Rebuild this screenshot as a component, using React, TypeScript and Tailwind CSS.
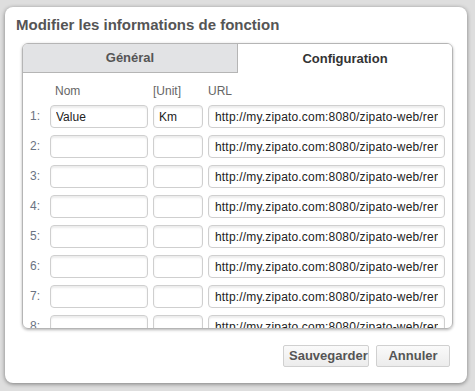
import React from "react";

const URL_VALUE = "http://my.zipato.com:8080/zipato-web/remoting/attribute/set?serial=";

const rows = [
  { nom: "Value", unit: "Km" },
  { nom: "", unit: "" },
  { nom: "", unit: "" },
  { nom: "", unit: "" },
  { nom: "", unit: "" },
  { nom: "", unit: "" },
  { nom: "", unit: "" },
  { nom: "", unit: "" },
];

const inputClass =
  "h-[23px] rounded-[4px] border border-[#cfcfcf] bg-white px-[5px] text-[12px] text-[#222] shadow-[inset_0_2px_2px_rgba(0,0,0,0.08)] outline-none";

const App = () => {
  return (
    <div
      className="w-[475px] h-[391px] overflow-hidden bg-[#dedede] pt-[7px] pl-[5px]"
      style={{ fontFamily: '"Liberation Sans", Arial, sans-serif' }}
    >
      <div className="w-[462px] h-[376px] rounded-[8px] bg-white shadow-[0_1px_4px_rgba(0,0,0,0.45)] flex flex-col">
        <h1 className="pl-[11px] pt-[9px] h-[27px] text-[15px] leading-[18px] font-bold text-[#555]">
          Modifier les informations de fonction
        </h1>

        <div className="ml-[17px] mt-[9px] w-[431px] h-[286px] rounded-[6px] border border-[#b5b5b5] shadow-[0_1px_3px_rgba(0,0,0,0.3)] overflow-hidden flex flex-col">
          <div className="flex h-[29px] shrink-0">
            <div className="w-[215px] flex items-center justify-center bg-[#e2e3e5] border-r border-b border-[#b5b5b5] text-[13px] font-bold text-[#555]">
              Général
            </div>
            <div className="flex-1 flex items-center justify-center bg-white text-[13px] font-bold text-[#333]">
              Configuration
            </div>
          </div>

          <div className="flex-1 overflow-hidden">
            <div className="flex h-[32px] items-center text-[12px] text-[#666] pt-[4px]">
              <span className="ml-[32px] w-[98px]">Nom</span>
              <span className="w-[55px]">[Unit]</span>
              <span>URL</span>
            </div>
            <div className="flex flex-col gap-[7px]">
              {rows.map((row, i) => (
                <div key={i} className="flex items-center h-[23px]">
                  <span className="w-[27px] pl-[7px] pb-[2px] text-[12px] text-[#6a7382]">{i + 1}:</span>
                  <input className={`${inputClass} w-[98px]`} defaultValue={row.nom} readOnly />
                  <input className={`${inputClass} ml-[5px] w-[50px]`} defaultValue={row.unit} readOnly />
                  <input
                    className={`${inputClass} ml-[5px] w-[237px] px-[6px] tracking-[0.18px]`}
                    defaultValue={URL_VALUE}
                    readOnly
                  />
                </div>
              ))}
            </div>
          </div>
        </div>

        <div className="flex justify-end gap-[7px] mt-[16px] mr-[17px]">
          <button className="h-[22px] px-[5px] w-[86px] rounded-[2px] border border-[#d0d0d0] bg-gradient-to-b from-[#fafafa] to-[#ececec] text-[13px] font-bold text-[#555]">
            Sauvegarder
          </button>
          <button className="h-[22px] w-[74px] rounded-[2px] border border-[#d0d0d0] bg-gradient-to-b from-[#fafafa] to-[#ececec] text-[13px] font-bold text-[#555]">
            Annuler
          </button>
        </div>
      </div>
    </div>
  );
};

export default App;
